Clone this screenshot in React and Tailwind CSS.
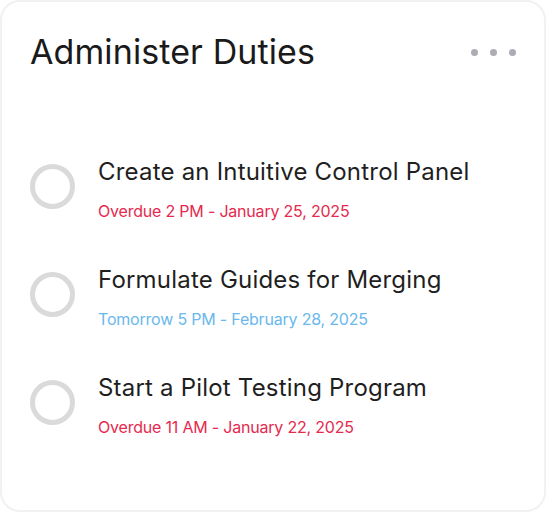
export default function App() {
  const tasks = [
    { title: "Create an Intuitive Control Panel", sub: "Overdue 2 PM - January 25, 2025", color: "text-[#e5294f]" },
    { title: "Formulate Guides for Merging", sub: "Tomorrow 5 PM - February 28, 2025", color: "text-[#6ab8ec]" },
    { title: "Start a Pilot Testing Program", sub: "Overdue 11 AM - January 22, 2025", color: "text-[#e5294f]" },
  ];
  return (
    <div className="w-[546px] h-[512px] bg-white font-['Inter',sans-serif]">
      <div className="w-full h-full rounded-[20px] border-2 border-[#f1f1f1] bg-white pl-[28px] pr-[28px] pt-[30px]">
        <div className="flex items-center justify-between h-[40px]">
          <h1 className="text-[34px] leading-[40px] text-[#1a1a1a] tracking-[0.1px]">Administer Duties</h1>
          <div className="flex gap-[12px] items-center">
            <span className="w-[7px] h-[7px] rounded-full bg-[#acacb4]"></span>
            <span className="w-[7px] h-[7px] rounded-full bg-[#acacb4]"></span>
            <span className="w-[7px] h-[7px] rounded-full bg-[#acacb4]"></span>
          </div>
        </div>
        <div className="mt-[84px] flex flex-col gap-[41px]">
          {tasks.map((t) => (
            <div key={t.title} className="flex items-start gap-[23px]">
              <div className="mt-[8px] w-[45px] h-[45px] rounded-full border-[5px] border-[#dadada] shrink-0"></div>
              <div className="flex flex-col">
                <div className="text-[24px] leading-[32px] text-[#1f1f1f] tracking-[0.2px]">{t.title}</div>
                <div className={`text-[16px] leading-[24px] mt-[11px] tracking-[-0.2px] ${t.color}`}>{t.sub}</div>
              </div>
            </div>
          ))}
        </div>
      </div>
    </div>
  );
}
